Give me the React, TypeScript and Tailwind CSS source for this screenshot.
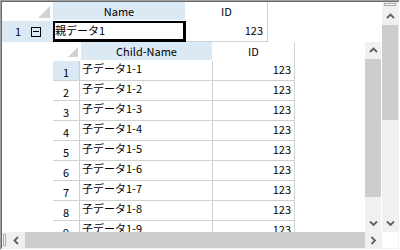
import React from 'react';

const font = { fontFamily: '"MS UI Gothic", "Noto Sans CJK JP", sans-serif' };

const Chevron = ({ dir }: { dir: 'up' | 'down' | 'left' | 'right' }) => {
  const pts = {
    up: '1,5 4.5,1.5 8,5',
    down: '1,1.5 4.5,5 8,1.5',
    left: '5,1 1.5,4.5 5,8',
    right: '1.5,1 5,4.5 1.5,8',
  }[dir];
  const vertical = dir === 'up' || dir === 'down';
  return (
    <svg width={vertical ? 9 : 7} height={vertical ? 7 : 9} viewBox={vertical ? '0 0 9 7' : '0 0 7 9'}>
      <polyline points={pts} fill="none" stroke="#606060" strokeWidth="1.8" />
    </svg>
  );
};

const Corner = ({ size }: { size: number }) => (
  <svg width={size} height={size} viewBox={`0 0 ${size} ${size}`}>
    <polygon points={`${size},0 ${size},${size} 0,${size}`} fill="#d2d2d2" />
  </svg>
);

const VScroll = ({ thumb, splitter }: { thumb: number; splitter?: boolean }) => (
  <div className="w-[16px] flex flex-col bg-[#f0f0f0]">
    {splitter && (
      <div className="h-[6px] px-[2px] pt-px">
        <div className="h-[3px] border border-[#a8a8a8] bg-white" />
      </div>
    )}
    <div className="h-[17px] flex items-center justify-center">
      <Chevron dir="up" />
    </div>
    <div className="bg-[#cdcdcd]" style={{ height: thumb }} />
    <div className="flex-1" />
    <div className="h-[17px] flex items-center justify-center">
      <Chevron dir="down" />
    </div>
  </div>
);

const children = Array.from({ length: 10 }, (_, i) => i + 1);

export default function App() {
  return (
    <div className="w-[400px] h-[250px] bg-white text-[11px] text-black border-t border-l border-[#a0a0a0] border-r border-b border-r-white border-b-white" style={font}>
      <div className="w-full h-full flex flex-col border-t border-l border-[#696969] border-r border-b border-r-[#f0f0f0] border-b-[#f0f0f0]">
        <div className="flex h-[230px]">
          {/* main grid */}
          <div className="flex-1 flex flex-col overflow-hidden">
            <div className="h-[19px] flex shrink-0">
              <div className="w-[51px] flex justify-end items-end pr-[3px] pb-[2px] border-b border-white">
                <Corner size={12} />
              </div>
              <div className="w-[133px] bg-[#dbe9f5] border-r border-b border-white flex items-center justify-center">
                Name
              </div>
              <div className="w-[82px] border-r border-[#d0d0d0] flex items-center justify-center">ID</div>
            </div>
            <div className="h-[21px] flex shrink-0">
              <div className="w-[51px] bg-[#dbe9f5] flex items-center pl-[13px] gap-[10px]">
                <span>1</span>
                <span className="w-[10px] h-[10px] border border-black flex items-center justify-center">
                  <span className="w-[6px] h-px bg-black" />
                </span>
              </div>
              <div className="w-[133px] border-l-2 border-t-2 border-r-[3px] border-b-[3px] border-black leading-[14px] whitespace-nowrap">
                親データ1
              </div>
              <div className="w-[82px] border-r border-b border-[#d0d0d0] text-right pr-[4px] leading-[14px] pt-[2px]">123</div>
            </div>
            {/* child grid */}
            <div className="flex-1 min-h-0 flex ml-[51px]">
              <div className="flex-1 overflow-hidden flex flex-col">
                <div className="h-[19px] flex shrink-0">
                  <div className="w-[27px] flex justify-end items-end pr-[2px] pb-[3px] border-b border-white">
                    <Corner size={10} />
                  </div>
                  <div className="w-[133px] bg-[#dbe9f5] border-l border-r border-b border-white flex items-center justify-center">
                    Child-Name
                  </div>
                  <div className="w-[82px] border-r border-[#d0d0d0] flex items-center justify-center">ID</div>
                </div>
                {children.map((n) => (
                  <div key={n} className="h-[20px] flex shrink-0">
                    <div
                      className={`w-[27px] border-r border-b border-[#d0d0d0] flex items-center justify-center pt-[3px] ${
                        n === 1 ? 'bg-[#dbe9f5]' : 'bg-white'
                      }`}
                    >
                      {n}
                    </div>
                    <div className="w-[133px] border-r border-b border-[#d0d0d0] pl-[2px] pt-px leading-[13px] whitespace-nowrap">
                      子データ1-{n}
                    </div>
                    <div className="w-[82px] border-r border-b border-[#d0d0d0] text-right pr-[3px] leading-[13px] pt-[2px]">
                      123
                    </div>
                  </div>
                ))}
              </div>
              <VScroll thumb={138} />
              <div className="w-px" />
            </div>
          </div>
          <VScroll thumb={95} splitter />
        </div>
        <div className="h-[16px] flex">
          <div className="w-[6px] py-[2px] pl-px bg-[#f0f0f0]">
            <div className="w-[3px] h-full border border-[#a8a8a8] bg-white" />
          </div>
          <div className="w-[17px] bg-[#f0f0f0] flex items-center justify-center">
            <Chevron dir="left" />
          </div>
          <div className="flex-1 bg-[#cdcdcd]" />
          <div className="w-[17px] bg-[#f0f0f0] flex items-center justify-center">
            <Chevron dir="right" />
          </div>
          <div className="w-[16px] bg-white" />
        </div>
      </div>
    </div>
  );
}
